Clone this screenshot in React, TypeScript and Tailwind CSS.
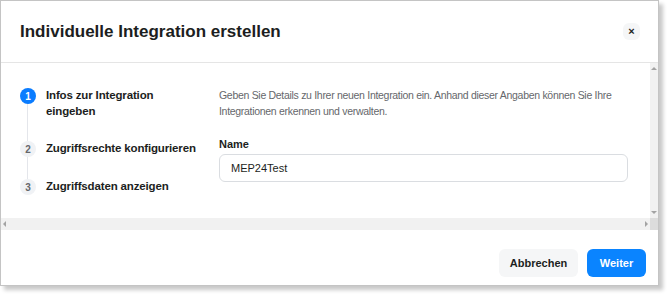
import React from "react";

const steps = [
  { n: 1, label: "Infos zur Integration", label2: "eingeben", active: true },
  { n: 2, label: "Zugriffsrechte konfigurieren", label2: "", active: false },
  { n: 3, label: "Zugriffsdaten anzeigen", label2: "", active: false },
];

function Steps() {
  return (
    <div className="relative flex w-[190px] shrink-0 flex-col gap-[21px]">
      <div className="absolute left-[7px] top-[16px] h-[88px] w-px bg-[#e4e6eb]" />
      {steps.map((s) => (
        <div key={s.n} className="relative flex items-start gap-[10px]">
          <div
            className={
              s.active
                ? "mt-px flex h-[16px] w-[16px] shrink-0 items-center justify-center rounded-full bg-[#0a7cff] text-[10px] font-bold text-white"
                : "mt-px flex h-[16px] w-[16px] shrink-0 items-center justify-center rounded-full bg-[#f0f2f5] text-[10px] font-bold text-[#65676b]"
            }
          >
            {s.n}
          </div>
          <div className="whitespace-nowrap text-[11.5px] font-bold leading-[16px] tracking-[-0.15px] text-[#1c1e21]">
            {s.label}
            {s.label2 && (
              <>
                <br />
                {s.label2}
              </>
            )}
          </div>
        </div>
      ))}
    </div>
  );
}

export default function App() {
  return (
    <div
      className="h-[296px] w-[670px] bg-white"
      style={{ fontFamily: '"Liberation Sans", Arial, sans-serif' }}
    >
      <div className="flex h-[286px] w-[659px] flex-col border border-[#c4c4c4] bg-white shadow-[4px_4px_4px_rgba(0,0,0,0.22)]">
        {/* header */}
        <div className="flex h-[62px] shrink-0 items-center justify-between border-b border-[#e5e5e5] pl-[19px] pr-[18px]">
          <div className="text-[17px] font-bold text-[#1c1e21]">
            Individuelle Integration erstellen
          </div>
          <button className="flex h-[17px] w-[17px] items-center justify-center rounded-md bg-[#f5f6f7] text-[11px] font-bold leading-none text-[#1c1e21]">
            ×
          </button>
        </div>

        {/* body with scrollbars */}
        <div className="flex h-[155px] shrink-0">
          <div className="flex flex-1 gap-[9px] pl-[19px] pt-[24px]">
            <Steps />
            <div className="w-[409px]">
              <p className="text-[10.5px] leading-[16px] tracking-[-0.3px] text-[#65676b]">
                Geben Sie Details zu Ihrer neuen Integration ein. Anhand dieser Angaben können Sie Ihre Integrationen erkennen und verwalten.
              </p>
              <div className="mt-[18px] text-[11px] font-bold leading-[14px] text-[#1c1e21]">
                Name
              </div>
              <div className="mt-[3px] flex h-[28px] items-center rounded-[6px] border border-[#dadde1] px-[11px] text-[11px] text-[#1c1e21]">
                MEP24Test
              </div>
            </div>
          </div>
          <div className="flex w-[8px] flex-col items-center justify-between bg-[#f1f1f1] py-[4px]">
            <div className="h-0 w-0 border-x-[3px] border-b-[3px] border-x-transparent border-b-[#a3a3a3]" />
            <div className="h-0 w-0 border-x-[3px] border-t-[3px] border-x-transparent border-t-[#a3a3a3]" />
          </div>
        </div>
        <div className="flex h-[12px] shrink-0">
          <div className="flex flex-1 items-center justify-between bg-[#f1f1f1] px-[2px]">
            <div className="h-0 w-0 border-y-[3px] border-r-[3px] border-y-transparent border-r-[#a3a3a3]" />
            <div className="h-0 w-0 border-y-[3px] border-l-[3px] border-y-transparent border-l-[#a3a3a3]" />
          </div>
          <div className="w-[8px] bg-[#dcdcdc]" />
        </div>

        {/* footer */}
        <div className="flex flex-1 items-start justify-end gap-[9px] pr-[12px] pt-[19px]">
          <button className="h-[28px] w-[79px] rounded-[6px] bg-[#f5f6f7] text-[11px] font-bold text-[#1c1e21]">
            Abbrechen
          </button>
          <button className="h-[28px] w-[59px] rounded-[6px] bg-[#0a84ff] text-[11px] font-bold text-white">
            Weiter
          </button>
        </div>
      </div>
    </div>
  );
}
